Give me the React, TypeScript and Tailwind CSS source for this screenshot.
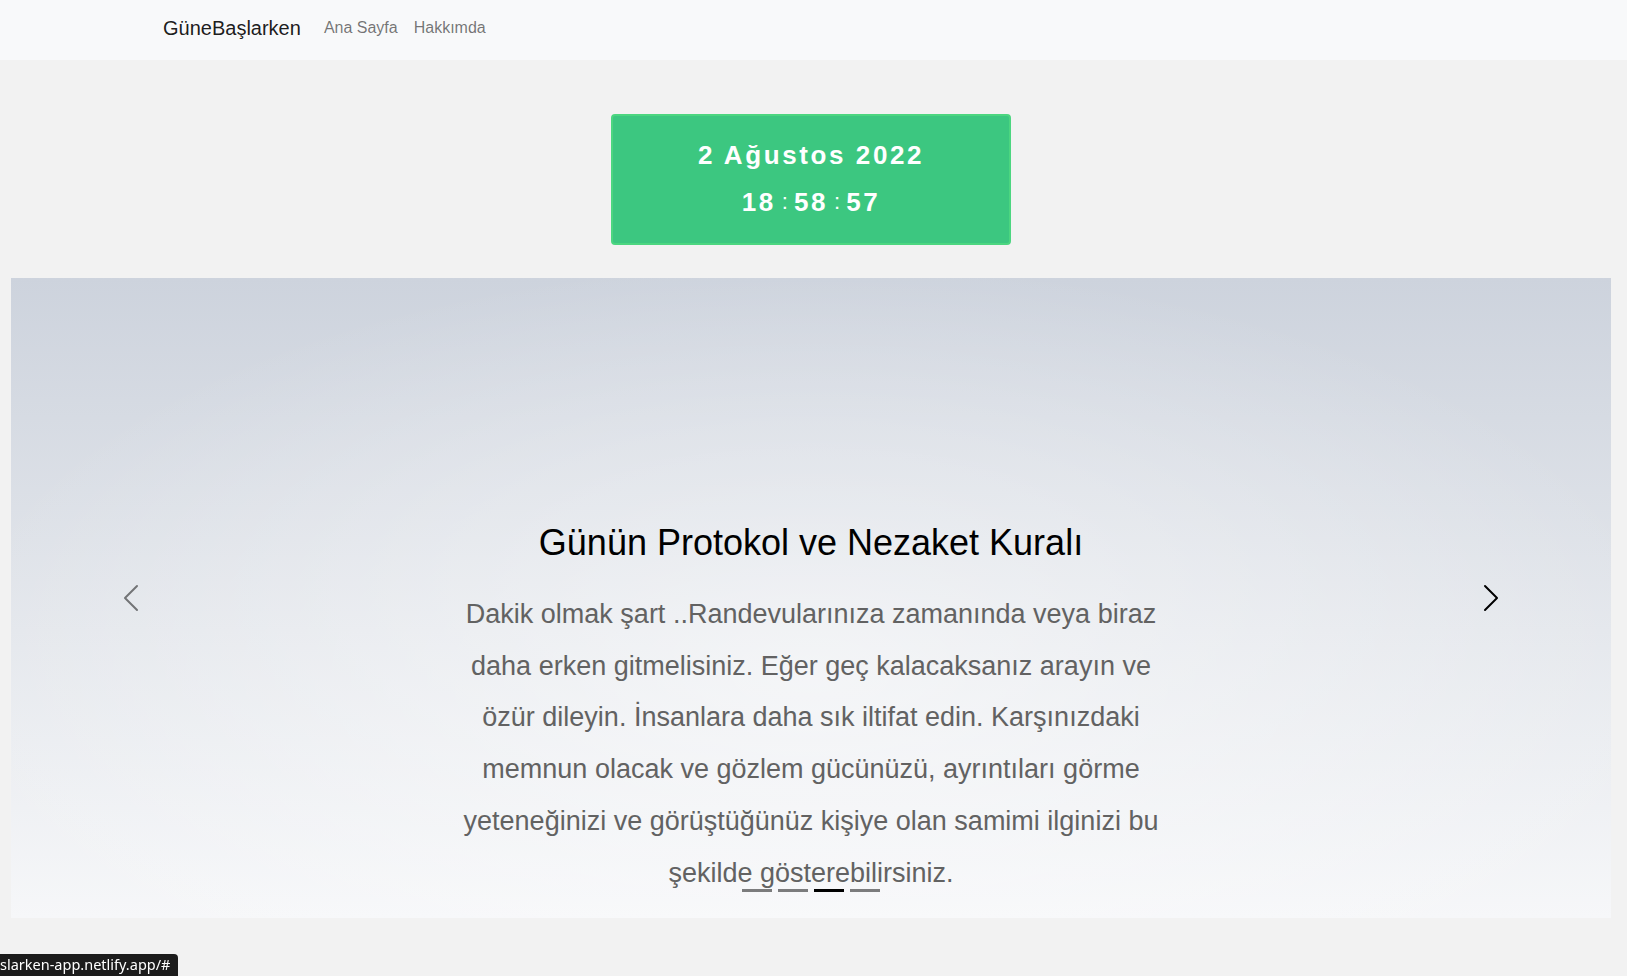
import { useState } from 'react'

const lines = [
    'Dakik olmak şart ..Randevularınıza zamanında veya biraz',
    'daha erken gitmelisiniz. Eğer geç kalacaksanız arayın ve',
    'özür dileyin. İnsanlara daha sık iltifat edin. Karşınızdaki',
    'memnun olacak ve gözlem gücünüzü, ayrıntıları görme',
    'yeteneğinizi ve görüştüğünüz kişiye olan samimi ilginizi bu',
    'şekilde gösterebilirsiniz.',
]

const Chevron = ({ dir, className }: { dir: 'left' | 'right'; className?: string }) => (
    <svg viewBox="0 0 16 16" className={className} fill="currentColor">
        {dir === 'left' ? (
            <path d="M11.354 1.646a.5.5 0 0 1 0 .708L5.707 8l5.647 5.646a.5.5 0 0 1-.708.708l-6-6a.5.5 0 0 1 0-.708l6-6a.5.5 0 0 1 .708 0z" />
        ) : (
            <path d="M4.646 1.646a.5.5 0 0 1 .708 0l6 6a.5.5 0 0 1 0 .708l-6 6a.5.5 0 0 1-.708-.708L10.293 8 4.646 2.354a.5.5 0 0 1 0-.708z" />
        )}
    </svg>
)

const App = () => {
    const [active] = useState(2)
    return (
        <div className="min-h-[976px] bg-[#f2f2f2] font-['Liberation_Sans',Arial,sans-serif] relative">
            <nav className="h-[60px] bg-[#f8f9fa] flex items-center pl-[163px] pb-[4px]">
                <a href="#" className="text-[20px] text-black/90 mr-[23px] leading-none">GüneBaşlarken</a>
                <a href="#" className="text-[16px] text-black/55 mr-[16px]">Ana Sayfa</a>
                <a href="#" className="text-[16px] text-black/55">Hakkımda</a>
            </nav>

            <main className="ml-[11px] mr-[16px] flex flex-col items-center">
                <div className="mt-[54px] w-[400px] h-[131px] bg-[#3cc780] border-2 border-[#4cd680] rounded-[4px] flex flex-col items-center text-white font-bold text-[26px] tracking-[2.6px]">
                    <p className="mt-[23px] leading-[32px]">2 Ağustos 2022</p>
                    <p className="mt-[15px] leading-[32px] flex items-center">
                        18<span className="font-normal text-[22px] mx-[6px] tracking-normal">:</span>58<span className="font-normal text-[22px] mx-[6px] tracking-normal">:</span>57
                    </p>
                </div>

                <section className="relative mt-[33px] w-full h-[640px] bg-[radial-gradient(ellipse_55%_65%_at_50%_62%,rgba(255,255,255,0.55),rgba(255,255,255,0)),linear-gradient(to_bottom,#cdd3dd,#e4e7ec_55%,#f6f7f9)] flex flex-col items-center">
                    <h2 className="mt-[243px] text-[36px] leading-[43px] text-black">Günün Protokol ve Nezaket Kuralı</h2>
                    <p className="mt-[25px] text-[27px] leading-[51.7px] text-[#626262] text-center">
                        {lines.map((l, i) => (
                            <span key={i} className="block">{l}</span>
                        ))}
                    </p>

                    <button className="absolute left-0 top-0 h-full w-[15%] flex items-center justify-center text-black/50">
                        <Chevron dir="left" className="w-8 h-8" />
                    </button>
                    <button className="absolute right-0 top-0 h-full w-[15%] flex items-center justify-center text-black">
                        <Chevron dir="right" className="w-8 h-8" />
                    </button>

                    <div className="absolute bottom-[26px] left-0 right-0 flex justify-center gap-[6px]">
                        {[0, 1, 2, 3].map((i) => (
                            <span key={i} className={`${i === active ? 'bg-black' : 'bg-black/50'} w-[30px] h-[3px]`} />
                        ))}
                    </div>
                </section>
            </main>

            <div className="fixed left-0 bottom-0 h-[22px] pr-[7px] bg-[#1c1c1c] rounded-tr-[4px] flex items-center text-white text-[14.5px] font-['Noto_Sans',sans-serif]">
                slarken-app.netlify.app/#
            </div>
        </div>
    )
}

export default App
